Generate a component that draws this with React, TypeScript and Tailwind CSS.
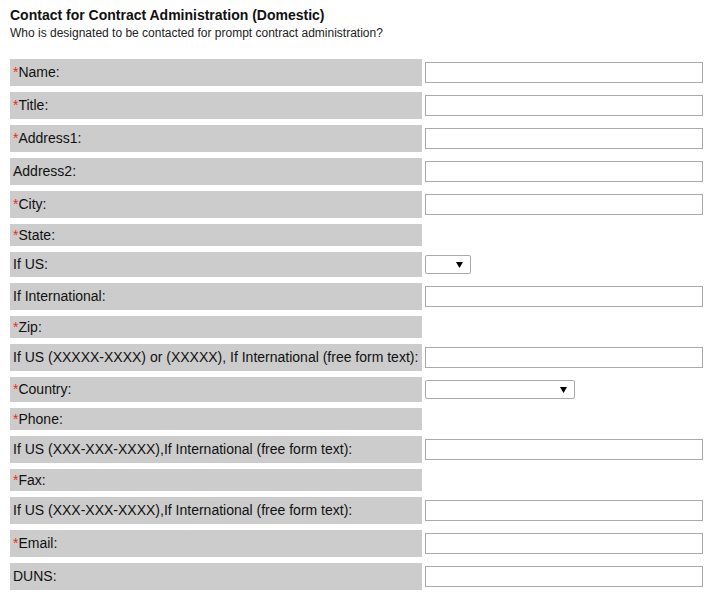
import React from "react";

type Kind = "text" | "none" | "select-sm" | "select-lg";
type Row = { label: string; req?: boolean; kind: Kind };

const rows: Row[] = [
  { label: "Name:", req: true, kind: "text" },
  { label: "Title:", req: true, kind: "text" },
  { label: "Address1:", req: true, kind: "text" },
  { label: "Address2:", kind: "text" },
  { label: "City:", req: true, kind: "text" },
  { label: "State:", req: true, kind: "none" },
  { label: "If US:", kind: "select-sm" },
  { label: "If International:", kind: "text" },
  { label: "Zip:", req: true, kind: "none" },
  { label: "If US (XXXXX-XXXX) or (XXXXX), If International (free form text):", kind: "text" },
  { label: "Country:", req: true, kind: "select-lg" },
  { label: "Phone:", req: true, kind: "none" },
  { label: "If US (XXX-XXX-XXXX),If International (free form text):", kind: "text" },
  { label: "Fax:", req: true, kind: "none" },
  { label: "If US (XXX-XXX-XXXX),If International (free form text):", kind: "text" },
  { label: "Email:", req: true, kind: "text" },
  { label: "DUNS:", kind: "text" },
];

function Select({ wide }: { wide: boolean }) {
  return (
    <div className={`relative h-[19px] ${wide ? "w-[150px]" : "w-[46px]"}`}>
      <select className="block h-full w-full appearance-none rounded-[2px] border border-[#a9a9a9] bg-white outline-none" />
      <svg
        className="pointer-events-none absolute right-[8px] top-[7px]"
        width="7"
        height="6"
        viewBox="0 0 7 6"
      >
        <path d="M0 0 H7 L3.5 6 Z" fill="#000" />
      </svg>
    </div>
  );
}

export default function App() {
  return (
    <div
      className="bg-white pl-[10px] pt-[7px] text-black"
      style={{ fontFamily: '"Liberation Sans", Arial, sans-serif' }}
    >
      <div className="text-[14px] font-bold leading-[16px] text-[#111]">
        Contact for Contract Administration (Domestic)
      </div>
      <div className="mt-[3px] text-[12px] leading-[14px] text-[#222]">
        Who is designated to be contacted for prompt contract administration?
      </div>
      <div className="mt-[19px] flex flex-col gap-[6px]">
        {rows.map((r, i) => {
          const h =
            r.kind === "text"
              ? "h-[27px]"
              : r.kind === "none"
              ? "h-[22px]"
              : "h-[25px]";
          return (
            <div key={i} className={`flex gap-[3px] ${h}`}>
              <div className="flex w-[412px] items-center bg-[#cccccc] px-[3px] text-[14px] text-[#111]">
                {r.req && <span className="text-[#e0301e]">*</span>}
                <span>{r.label}</span>
              </div>
              <div className="flex w-[278px] items-center">
                {r.kind === "text" && (
                  <input
                    type="text"
                    className="block h-[21px] w-[278px] border border-[#a9a9a9] bg-white outline-none"
                  />
                )}
                {r.kind === "select-sm" && <Select wide={false} />}
                {r.kind === "select-lg" && <Select wide={true} />}
              </div>
            </div>
          );
        })}
      </div>
    </div>
  );
}
